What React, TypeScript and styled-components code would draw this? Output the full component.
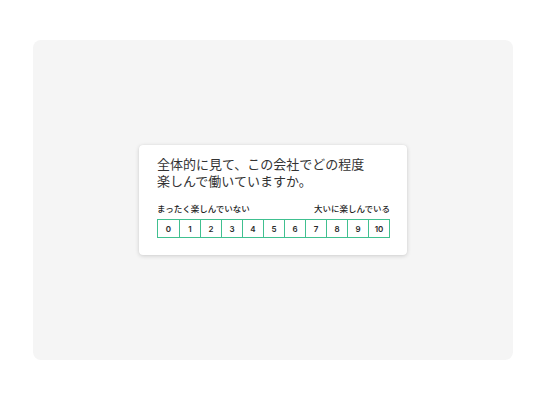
import React from "react";
import styled, { createGlobalStyle } from "styled-components";

const Global = createGlobalStyle`
  html, body { margin: 0; padding: 0; background: #ffffff; }
  body { font-family: "Noto Sans CJK JP", "Noto Sans", sans-serif; }
`;

const Page = styled.div`
  width: 546px;
  height: 400px;
  display: flex;
  align-items: center;
  justify-content: center;
`;

const Panel = styled.div`
  width: 480px;
  height: 320px;
  border-radius: 8px;
  background: #f5f5f5;
  display: flex;
  align-items: center;
  justify-content: center;
`;

const Card = styled.div`
  width: 268px;
  box-sizing: border-box;
  background: #ffffff;
  border-radius: 4px;
  box-shadow: 0 1px 4px rgba(0, 0, 0, 0.16), 0 0 1px rgba(0, 0, 0, 0.08);
  padding: 10px 17px 17px 18px;
`;

const Title = styled.div`
  font-size: 13px;
  color: #333333;
  margin-bottom: 12px;
  display: flex;
  flex-direction: column;
  gap: 0;
`;

const TitleLine = styled.div`
  line-height: 18px;
  white-space: nowrap;
  margin-top: -0.5px;
`;

const Labels = styled.div`
  display: flex;
  justify-content: space-between;
  font-size: 8.5px;
  line-height: 12px;
  font-weight: 500;
  color: #222222;
  margin-bottom: 5px;
`;

const Scale = styled.div`
  display: grid;
  grid-template-columns: repeat(11, 1fr);
  border: 1px solid #40c090;
  height: 19px;
  box-sizing: border-box;
`;

const Cell = styled.div<{ $first?: boolean }>`
  display: flex;
  align-items: center;
  justify-content: center;
  border-left: ${(p) => (p.$first ? "none" : "1px solid #40c090")};
  font-size: 8px;
  font-weight: 600;
  color: #2a2a2a;
  font-family: Inter, "Noto Sans", sans-serif;
`;

export default function App() {
  const nums = Array.from({ length: 11 }, (_, i) => i);
  return (
    <>
      <Global />
      <Page>
        <Panel>
          <Card>
            <Title>
              <TitleLine>全体的に見て、この会社でどの程度</TitleLine>
              <TitleLine>楽しんで働いていますか。</TitleLine>
            </Title>
            <Labels>
              <span>まったく楽しんでいない</span>
              <span>大いに楽しんでいる</span>
            </Labels>
            <Scale>
              {nums.map((n) => (
                <Cell key={n} $first={n === 0}>
                  {n}
                </Cell>
              ))}
            </Scale>
          </Card>
        </Panel>
      </Page>
    </>
  );
}
